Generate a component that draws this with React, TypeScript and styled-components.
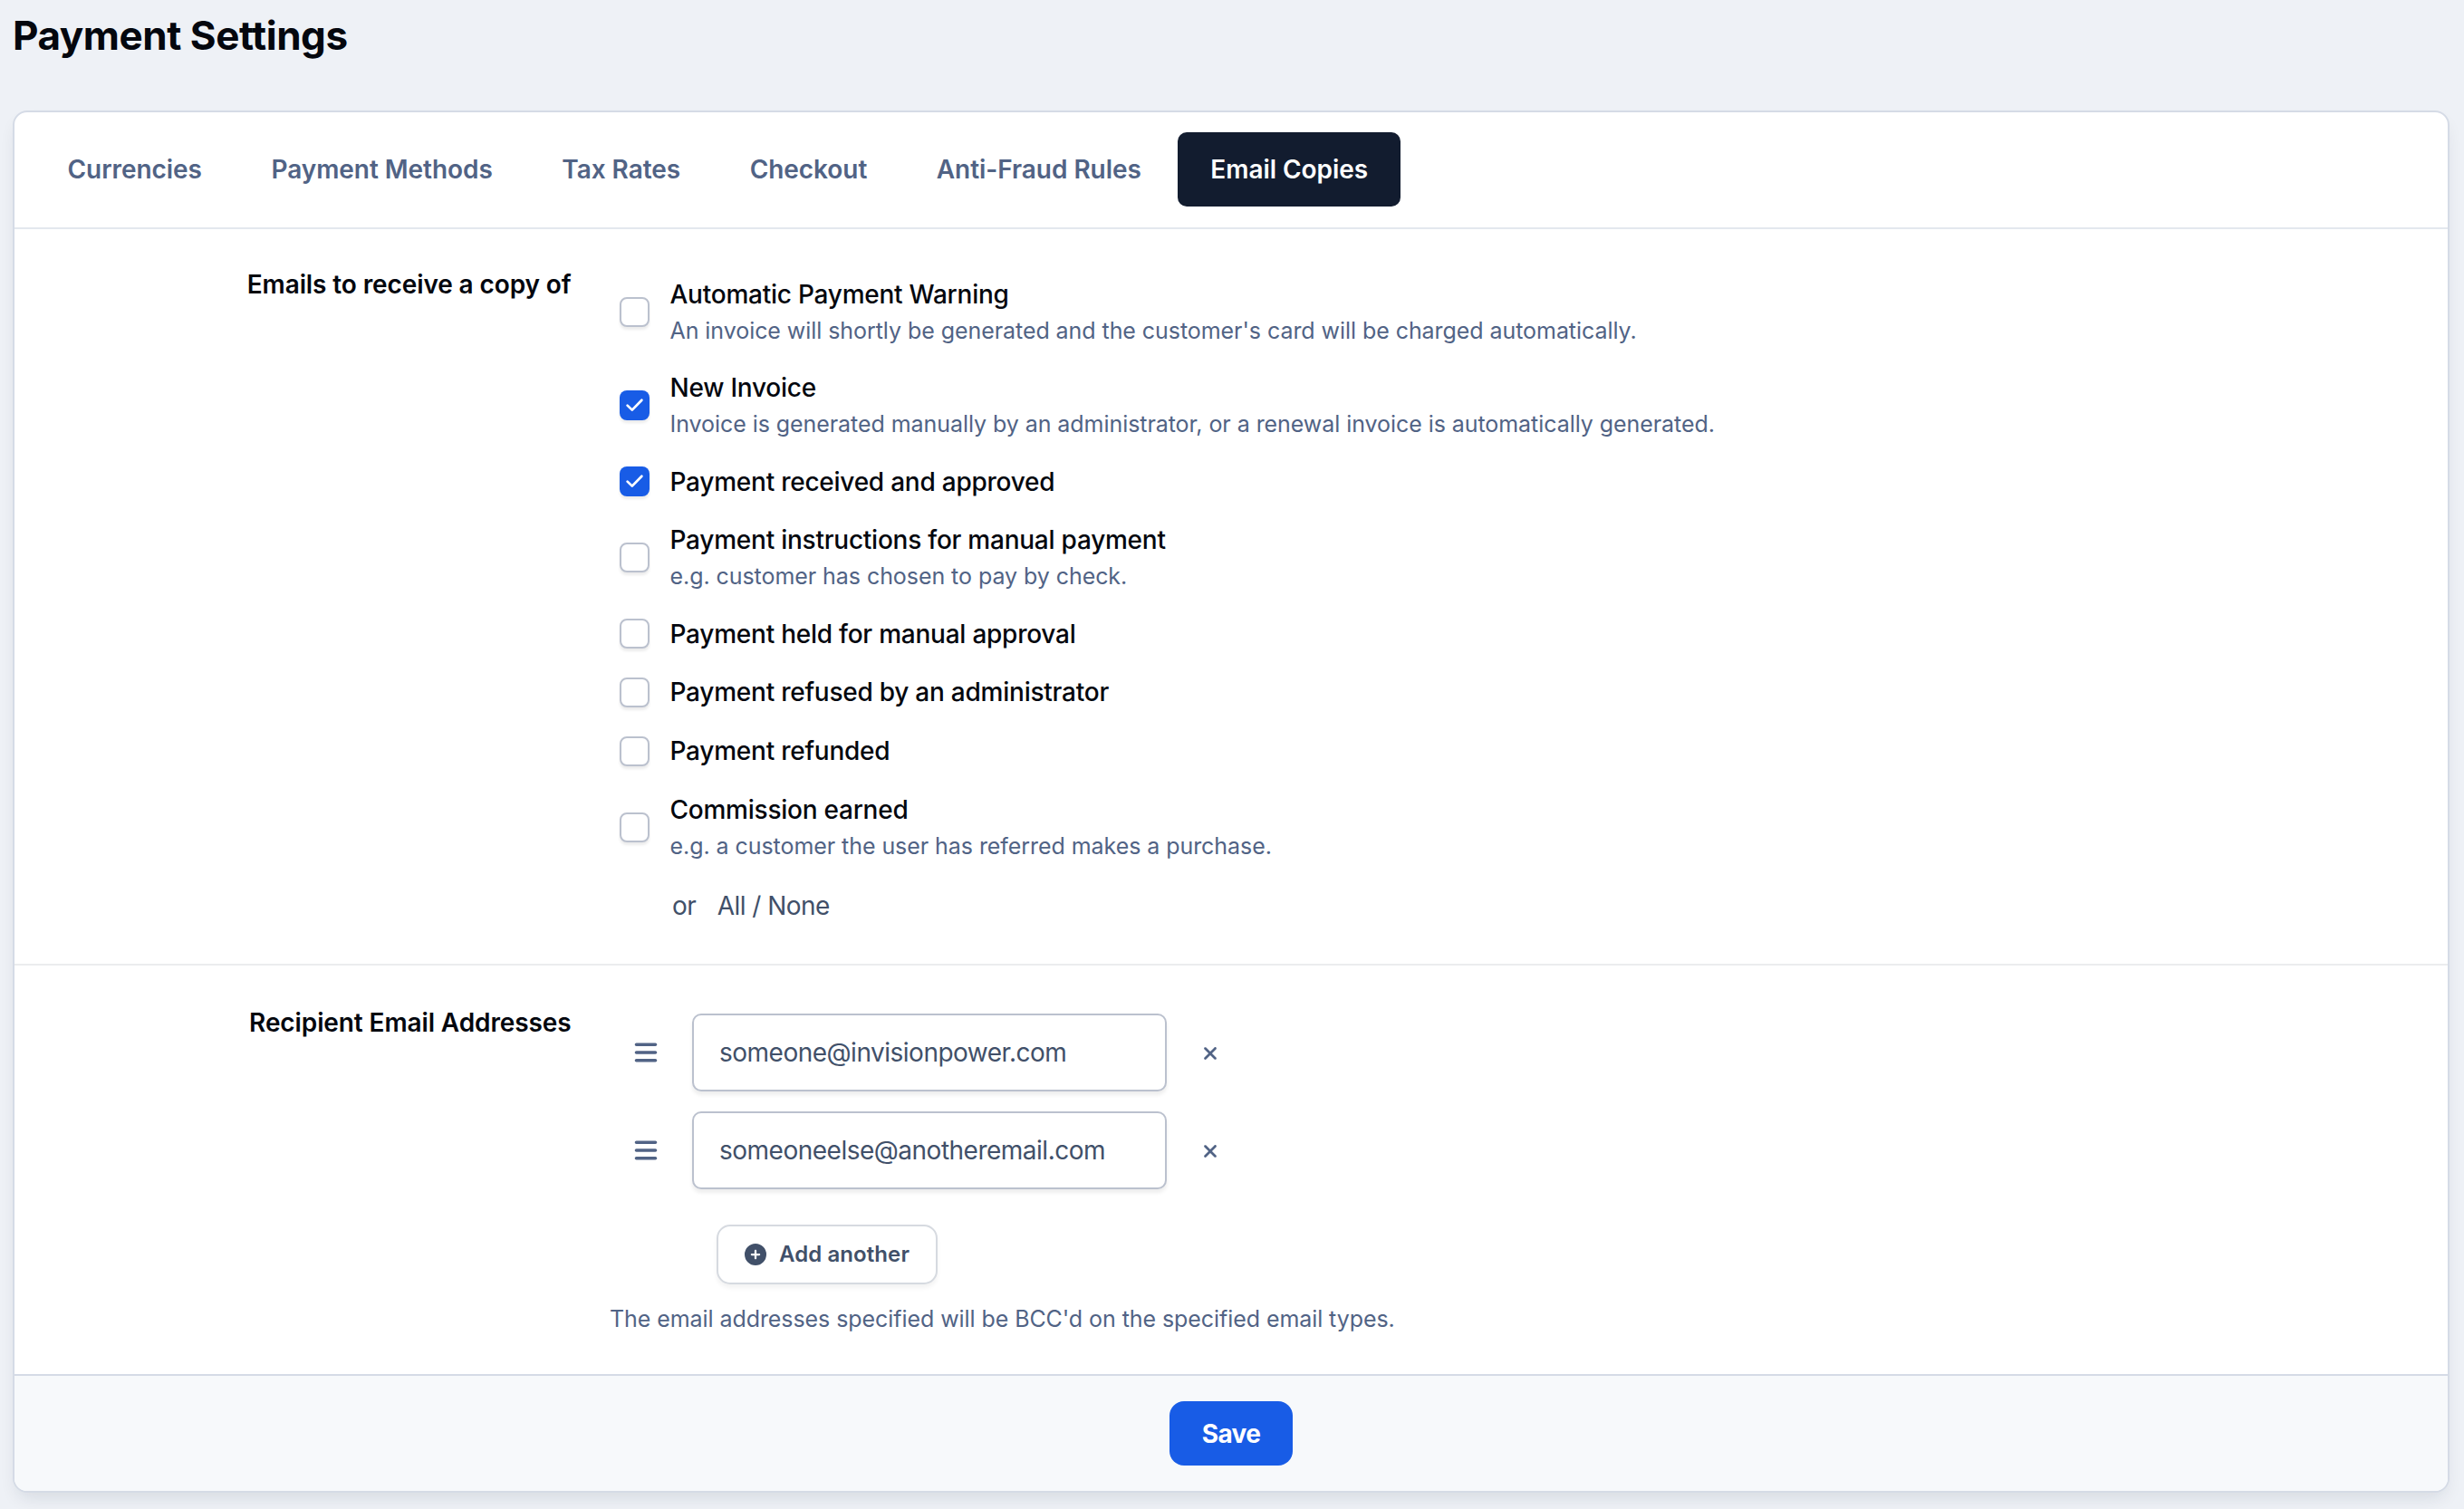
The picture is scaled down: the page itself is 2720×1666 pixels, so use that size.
import { useState } from "react";
import styled, { createGlobalStyle } from "styled-components";
import { FaBars, FaCirclePlus, FaXmark } from "react-icons/fa6";

const GlobalStyle = createGlobalStyle`
  *, *::before, *::after {
    box-sizing: border-box;
  }

  body {
    margin: 0;
    background-color: #eef1f6;
    color: #04070e;
    font-family: Inter, "Liberation Sans", sans-serif;
    font-size: 28px;
    line-height: 40px;
  }

  button, input {
    font: inherit;
  }
`

const Page = styled.main`
  height: 1666px;
  padding: 13px 16px 18px 14px;
  overflow: hidden;
`

const PageTitle = styled.h1`
  margin: 0 0 57px;
  font-size: 44px;
  font-weight: 700;
  line-height: 52px;
  letter-spacing: -0.46px;
`

const Card = styled.div`
  border: 2px solid #d5dbe6;
  border-radius: 16px;
  background-color: white;
  box-shadow: 0 10px 20px -6px rgba(20, 30, 55, .12);
  overflow: hidden;
`

const Tabs = styled.nav`
  display: flex;
  align-items: center;
  gap: 4.5px;
  height: 129px;
  padding: 0 22.5px 1px;
  border-bottom: 2px solid #e3e8ee;
`

const Tab = styled.button<{ $active: boolean }>`
  height: 82px;
  padding: 0 36px;
  border: 0;
  border-radius: 10px;
  background-color: ${props => props.$active ? "#121c2f" : "transparent"};
  color: ${props => props.$active ? "white" : "#516385"};
  font-weight: 600;
  letter-spacing: -0.05px;
  white-space: nowrap;
  cursor: pointer;
`

const FormRow = styled.section`
  display: grid;
  grid-template-columns: 614.5px 1fr;
  column-gap: 42.5px;

  & + & {
    border-top: 2px solid #ebecee;
  }
`

const RowLabel = styled.div`
  padding-top: 41px;
  font-weight: 600;
  letter-spacing: -0.11px;
  text-align: right;

  ${FormRow} + ${FormRow} > & {
    padding-top: 43px;
  }
`

const EmailTypes = styled.div`
  height: 811px;
  padding: 39.6px 0 0 11px;
`

const Option = styled.label`
  display: flex;
  align-items: center;
  gap: 22.5px;
  padding: 12.43px 0;
  cursor: pointer;
`

const CheckboxBox = styled.span<{ $checked: boolean }>`
  flex: none;
  width: 33px;
  height: 33px;
  border: ${props => props.$checked ? "0" : "2px solid #bbc1ce"};
  border-radius: 8px;
  background-color: ${props => props.$checked ? "#185ce6" : "white"};
  box-shadow: 0 3px 3px rgba(0, 0, 0, .08);

  svg {
    display: block;
  }
`

const HiddenInput = styled.input`
  appearance: none;
  display: none;
`

const OptionTitle = styled.div`
  font-weight: 500;
  letter-spacing: -0.24px;
`

const OptionText = styled.div`
  padding-top: 2px;
  color: #516385;
  font-size: 25px;
  line-height: 36.4px;
  letter-spacing: -0.06px;
`

const SelectAll = styled.div`
  display: flex;
  gap: 23.5px;
  margin-top: 15px;
  padding-left: 58px;
  color: #415069;
  letter-spacing: -0.55px;
`

const Recipients = styled.div`
  height: 451px;
  padding-top: 53px;
`

const Recipient = styled.div`
  display: flex;
  align-items: center;
  height: 86px;
  margin-bottom: 22px;
  padding-left: 26px;
  color: #516385;
`

const EmailInput = styled.input`
  width: 524px;
  height: 86px;
  margin: 0 37px 0 37px;
  padding: 0 28px;
  border: 2px solid #bbc1ce;
  border-radius: 10px;
  outline: none;
  background-color: white;
  color: #415069;
  letter-spacing: -0.5px;
  box-shadow: 0 4px 4px rgba(0, 0, 0, .07);
`

const RemoveIcon = styled(FaXmark)`
  margin-top: 2px;
`

const AddButton = styled.button`
  display: flex;
  align-items: center;
  gap: 14px;
  height: 66px;
  margin: 39px 0 0 118px;
  padding: 0 29px;
  border: 2px solid #d6dae0;
  border-radius: 15px;
  background-color: white;
  color: #415069;
  font-size: 24px;
  font-weight: 600;
  letter-spacing: 0.08px;
  box-shadow: 0 4px 5px rgba(0, 0, 0, .05);
`

const Hint = styled.div`
  margin-top: 18px;
  color: #516385;
  font-size: 25px;
  letter-spacing: -0.07px;
`

const Footer = styled.footer`
  display: flex;
  justify-content: center;
  height: 129px;
  padding-top: 28px;
  border-top: 2px solid #d5dbe6;
  background-color: #f7f9fb;
`

const SaveButton = styled.button`
  width: 136px;
  height: 71px;
  padding: 0;
  border: 0;
  border-radius: 16px;
  background-color: #185ce6;
  color: white;
  font-weight: 700;
  letter-spacing: -0.6px;
`

const tabs = ["Currencies", "Payment Methods", "Tax Rates", "Checkout", "Anti-Fraud Rules", "Email Copies"];

const emailTypes = [
  { title: "Automatic Payment Warning", text: "An invoice will shortly be generated and the customer's card will be charged automatically." },
  { title: "New Invoice", text: "Invoice is generated manually by an administrator, or a renewal invoice is automatically generated." },
  { title: "Payment received and approved" },
  { title: "Payment instructions for manual payment", text: "e.g. customer has chosen to pay by check." },
  { title: "Payment held for manual approval" },
  { title: "Payment refused by an administrator" },
  { title: "Payment refunded" },
  { title: "Commission earned", text: "e.g. a customer the user has referred makes a purchase." },
];

const Checkbox = ({ checked, onChange }: { checked: boolean; onChange: () => void }) => (
  <>
    <HiddenInput type="checkbox" checked={checked} onChange={onChange} />
    <CheckboxBox $checked={checked}>
      {checked && (
        <svg width="33" height="33" viewBox="0 0 33 33" fill="none">
          <path d="M8.6 16.6L13.8 21.6L24.4 10.8" stroke="white" strokeWidth="2.7" strokeLinecap="round" strokeLinejoin="round" />
        </svg>
      )}
    </CheckboxBox>
  </>
)

export const App = () => {
  const [activeTab, setActiveTab] = useState("Email Copies");
  const [selected, setSelected] = useState([1, 2]);
  const [emails, setEmails] = useState(["someone@invisionpower.com", "someoneelse@anotheremail.com"]);

  const handleToggle = (index: number) => {
    setSelected(selected.includes(index) ? selected.filter(i => i !== index) : [...selected, index]);
  }

  const handleEmail = (index: number, value: string) => {
    setEmails(emails.map((email, i) => i === index ? value : email));
  }

  return (
    <>
      <GlobalStyle />
      <Page>
        <PageTitle>Payment Settings</PageTitle>

        <Card>
          <Tabs>
            {tabs.map(tab => (
              <Tab key={tab} $active={tab === activeTab} onClick={() => setActiveTab(tab)}>{tab}</Tab>
            ))}
          </Tabs>

          <FormRow>
            <RowLabel>Emails to receive a copy of</RowLabel>
            <EmailTypes>
              {emailTypes.map((type, index) => (
                <Option key={type.title}>
                  <Checkbox checked={selected.includes(index)} onChange={() => handleToggle(index)} />
                  <div>
                    <OptionTitle>{type.title}</OptionTitle>
                    {type.text && <OptionText>{type.text}</OptionText>}
                  </div>
                </Option>
              ))}
              <SelectAll>
                <span>or</span>
                <span>All / None</span>
              </SelectAll>
            </EmailTypes>
          </FormRow>

          <FormRow>
            <RowLabel>Recipient Email Addresses</RowLabel>
            <Recipients>
              {emails.map((email, index) => (
                <Recipient key={index}>
                  <FaBars size={28} />
                  <EmailInput value={email} onChange={e => handleEmail(index, e.target.value)} />
                  <RemoveIcon size={22} />
                </Recipient>
              ))}
              <AddButton onClick={() => setEmails([...emails, ""])}>
                <FaCirclePlus size={24} />
                Add another
              </AddButton>
              <Hint>The email addresses specified will be BCC'd on the specified email types.</Hint>
            </Recipients>
          </FormRow>

          <Footer>
            <SaveButton>Save</SaveButton>
          </Footer>
        </Card>
      </Page>
    </>
  )
}

export default App;
